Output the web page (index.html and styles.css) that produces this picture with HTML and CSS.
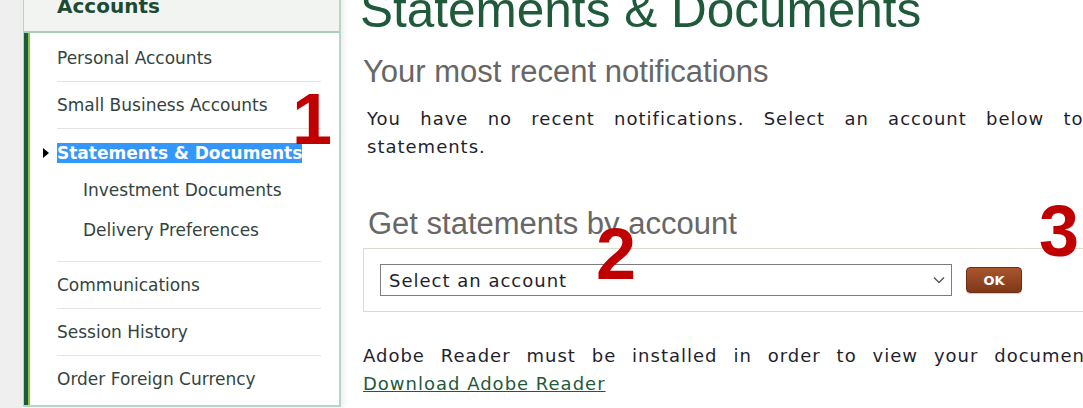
FILE: index.html
```html
<!DOCTYPE html>
<html lang="en">
<head>
<meta charset="utf-8">
<title>Statements &amp; Documents</title>
<link rel="stylesheet" href="styles.css">
</head>
<body>
<div class="page">
  <div class="gutter"></div>
  <aside class="sidebar">
    <div class="side-head">Accounts</div>
    <ul class="side-nav">
      <li><a href="#">Personal Accounts</a></li>
      <li><a href="#">Small Business Accounts</a></li>
      <li class="current"><a href="#" class="sel">Statements &amp; Documents</a>
        <ul class="sub">
          <li><a href="#">Investment Documents</a></li>
          <li><a href="#">Delivery Preferences</a></li>
        </ul>
      </li>
      <li><a href="#">Communications</a></li>
      <li><a href="#">Session History</a></li>
      <li><a href="#">Order Foreign Currency</a></li>
    </ul>
  </aside>
  <main class="content">
    <h1 class="title">Statements &amp; Documents</h1>
    <h2 class="section">Your most recent notifications</h2>
    <p class="note">You have no recent notifications. Select an account below to view your statements.</p>
    <h2 class="section section-get">Get statements by account</h2>
    <div class="picker">
      <div class="select-wrap">
        <select class="account-select">
          <option>Select an account</option>
        </select>
        <svg class="chev" width="12" height="8" viewBox="0 0 12 8"><path d="M1 1.5 L6 6.5 L11 1.5" fill="none" stroke="#5a5a5a" stroke-width="1.5"/></svg>
      </div>
      <button class="ok" type="button">OK</button>
    </div>
    <p class="adobe">Adobe Reader must be installed in order to view your documents online. <a href="#" class="dl">Download Adobe Reader</a></p>
  </main>
  <span class="mark m1">1</span>
  <span class="mark m2">2</span>
  <span class="mark m3">3</span>
</div>
</body>
</html>
```

FILE: styles.css
```css
html, body {
  margin: 0;
  padding: 0;
  background: #ffffff;
  overflow: hidden;
}

.page {
  position: relative;
  display: flex;
  width: 1083px;
  height: 427px;
  margin-top: -19px;
  overflow: hidden;
}

.gutter {
  width: 23px;
  flex: none;
  background: #efefef;
}

.sidebar {
  width: 318px;
  flex: none;
  box-sizing: border-box;
  align-self: flex-start;
  background: #ffffff;
  border-left: 1px solid #b7d5c7;
  border-right: 2px solid #b7d5c7;
  border-bottom: 2px solid #b7d5c7;
  box-shadow: 3px 0 5px rgba(0, 0, 0, 0.07);
  font-family: "DejaVu Sans", Verdana, sans-serif;
}

.side-head {
  height: 52px;
  box-sizing: border-box;
  padding: 13px 0 0 33px;
  background: #f2f4f2;
  border-bottom: 2px solid #a9cdb9;
  font-size: 20px;
  font-weight: bold;
  line-height: 24px;
  color: #1d4a33;
}

.side-nav {
  list-style: none;
  margin: 0;
  padding: 2px 18px 3px 29px;
  border-left: 4px solid #1c5b3a;
  box-shadow: inset 2px 0 0 #8cc63f;
}

.side-nav > li {
  padding: 12px 0;
  border-bottom: 1px solid #e4e4e4;
  font-size: 17px;
  line-height: 22px;
}

.side-nav > li:last-child {
  border-bottom: none;
}

.side-nav a {
  color: #33443e;
  text-decoration: none;
}

.side-nav > li.current {
  position: relative;
  padding-top: 13px;
  padding-bottom: 11px;
}

.side-nav > li.current::before {
  content: "";
  position: absolute;
  left: -14px;
  top: 19px;
  border-top: 5px solid transparent;
  border-bottom: 5px solid transparent;
  border-left: 6px solid #000000;
}

.side-nav a.sel {
  font-weight: bold;
  color: #ffffff;
  background: #3397fd;
}

.sub {
  list-style: none;
  margin: 6px 0 0 0;
  padding: 0 0 0 26px;
}

.sub li {
  padding: 9px 0;
  font-size: 17px;
  line-height: 22px;
}

.content {
  flex: none;
  width: 900px;
  padding-left: 22px;
}

.title {
  margin: 0 0 0 -3px;
  font-family: "Liberation Sans", Arial, sans-serif;
  font-size: 49.5px;
  font-weight: normal;
  line-height: 57px;
  color: #1f5a3b;
  white-space: nowrap;
}

.section {
  margin: 16px 0 0 0;
  font-family: "Liberation Sans", Arial, sans-serif;
  font-size: 31px;
  font-weight: normal;
  line-height: 36px;
  color: #676767;
  white-space: nowrap;
}

.note {
  width: 845px;
  margin: 15px 0 0 4px;
  font-family: "DejaVu Sans", Verdana, sans-serif;
  font-size: 18px;
  line-height: 28px;
  letter-spacing: 1px;
  word-spacing: 2px;
  text-align: justify;
  color: #1f1f2e;
}

.section-get {
  margin: 45px 0 0 5px;
}

.picker {
  display: flex;
  align-items: center;
  width: 900px;
  margin-top: 6px;
  padding: 15px 16px;
  border: 1px solid #d9dccb;
  background: #ffffff;
}

.select-wrap {
  position: relative;
  width: 572px;
  height: 32px;
}

.account-select {
  appearance: none;
  -webkit-appearance: none;
  width: 100%;
  height: 100%;
  box-sizing: border-box;
  margin: 0;
  padding: 0 0 0 8px;
  border: 1px solid #7d7d7d;
  border-radius: 0;
  background: #ffffff;
  font-family: "DejaVu Sans", Verdana, sans-serif;
  font-size: 18px;
  letter-spacing: 1px;
  color: #1f1f2e;
}

.chev {
  position: absolute;
  right: 7px;
  top: 12px;
}

.ok {
  width: 56px;
  height: 26px;
  margin-left: 14px;
  padding: 0;
  border: 1px solid #6e2e12;
  border-radius: 4px;
  background: linear-gradient(#a9562d, #7f3818);
  box-shadow: 0 1px 1px rgba(0, 0, 0, 0.2);
  color: #ffffff;
  font-family: "DejaVu Sans", Verdana, sans-serif;
  font-size: 13px;
  font-weight: bold;
}

.adobe {
  width: 824px;
  margin: 30px 0 0 0;
  font-family: "DejaVu Sans", Verdana, sans-serif;
  font-size: 18px;
  line-height: 28px;
  letter-spacing: 1px;
  text-align: justify;
  color: #1f1f2e;
}

.dl {
  color: #1f5a3b;
  text-decoration: underline;
  white-space: nowrap;
}

.mark {
  position: absolute;
  font-family: "Liberation Sans", Arial, sans-serif;
  font-size: 72px;
  font-weight: bold;
  line-height: 72px;
  color: #c00000;
}

.m1 { left: 292px; top: 102px; }
.m2 { left: 596px; top: 237px; }
.m3 { left: 1039px; top: 214px; }
```
